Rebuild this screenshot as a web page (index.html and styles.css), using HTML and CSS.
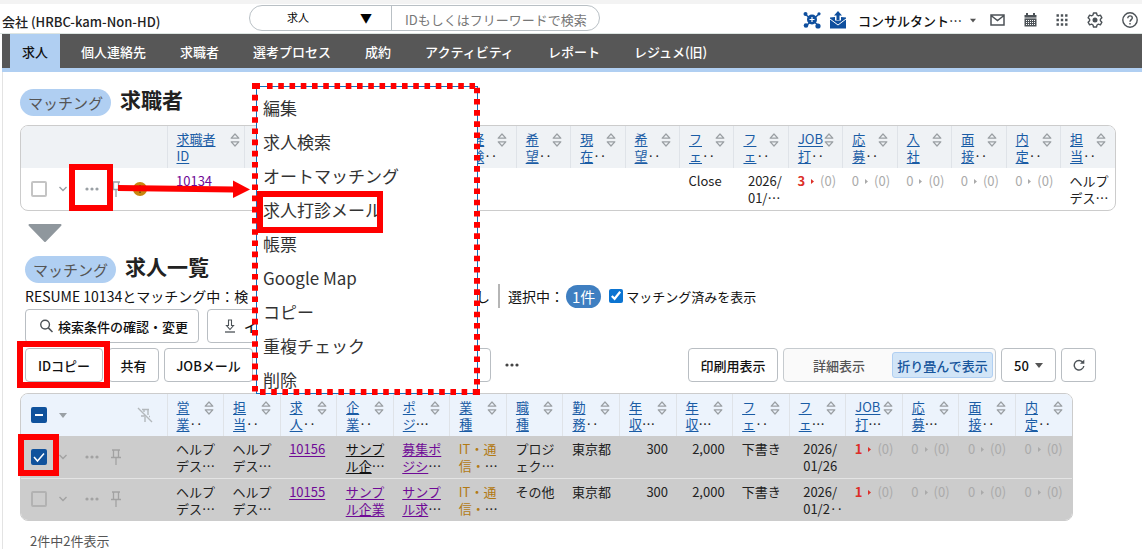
FILE: index.html
```html
<!DOCTYPE html>
<html lang="ja">
<head>
<meta charset="utf-8">
<title>求人一覧</title>
<link rel="stylesheet" href="styles.css">
</head>
<body>
<svg class="defs" aria-hidden="true">
  <symbol id="sort" viewBox="0 0 10 14"><path d="M1.200 5.200 5 1l3.800 4.200zM1.200 8.800 5 13l3.800-4.200z" fill="none" stroke="#9a9fa3" stroke-width="1.200" stroke-linejoin="round"/></symbol>
  <symbol id="pin" viewBox="0 0 12 16"><path d="M2 1h8M3.500 1v7M8.500 1v7M1 8.500h10M6 8.500V16" fill="none" stroke="currentColor" stroke-width="1.300"/></symbol>
  <symbol id="chev" viewBox="0 0 10 6"><path d="m1.500 1 3.500 3.500L8.500 1" fill="none" stroke="currentColor" stroke-width="1.400"/></symbol>
  <symbol id="dots" viewBox="0 0 14 4"><g fill="currentColor"><circle cx="2" cy="2" r="1.600"/><circle cx="7" cy="2" r="1.600"/><circle cx="12" cy="2" r="1.600"/></g></symbol>
  <symbol id="caret" viewBox="0 0 8 5"><path d="M0 0h8L4 5z" fill="currentColor"/></symbol>
</svg>

<header class="top">
  <div class="company">会社 (HRBC-kam-Non-HD)</div>
  <form class="search">
    <select aria-label="検索対象"><option>求人</option></select><span class="tri" aria-hidden="true">▼</span>
    <input type="text" aria-label="検索" placeholder="IDもしくはフリーワードで検索">
  </form>
  <div class="tools">
    <button aria-label="連携"><svg width="18" height="18" viewBox="0 0 18 18"><g stroke="#0f4f9e" stroke-width="1.500"><path d="M2 3l14 12M16 3 3 15"/></g><g fill="#0f4f9e"><circle cx="9" cy="8.500" r="5"/><circle cx="2.500" cy="3" r="2"/><circle cx="16" cy="2.800" r="1.600"/><circle cx="3" cy="14.500" r="2.300"/><circle cx="15" cy="15" r="2.600"/></g><path d="M6.500 8.500h5M9 6v5" stroke="#fff" stroke-width="1.200"/></svg></button>
    <button aria-label="メール取込"><svg width="16" height="18" viewBox="0 0 16 18"><path d="M0 6.500 5 6v3.500h6V6l5 .5V17.500H0z" fill="#0f4f9e"/><path d="M0 8l8 6 8-6" fill="none" stroke="#fff" stroke-width="1"/><path d="M8 0l4 4.500H9.500V9h-3V4.500H4z" fill="#0f4f9e"/></svg></button>
    <button class="user">コンサルタント…<svg width="6" height="5"><use href="#caret"/></svg></button>
    <button aria-label="メール"><svg width="15" height="12" viewBox="0 0 15 12"><path d="M1 1h13v10H1zM1 1.500l6.500 5 6.500-5" fill="none" stroke="#4c5257" stroke-width="1.500"/></svg></button>
    <button aria-label="カレンダー"><svg width="13" height="14" viewBox="0 0 13 14"><path d="M.5 2h12v11.500H.5z" fill="#4c5257"/><path d="M3 0v2M10 0v2" stroke="#4c5257" stroke-width="2"/><path d="M0 5h13" stroke="#fff" stroke-width=".8"/><path d="M2 7.500h9M2 9.500h9M2 11.500h9" stroke="#fff" stroke-dasharray="1 1"/></svg></button>
    <button aria-label="アプリ"><svg width="12" height="12" viewBox="0 0 12 12"><path d="M.5 1.500h11M.5 6h11M.5 10.500h11" stroke="#4c5257" stroke-width="2.400" stroke-dasharray="2.400 1.900"/></svg></button>
    <button aria-label="設定"><svg width="16" height="16" viewBox="0 0 16 16"><path d="M6.500 1h3l.5 2 1.400.8 2-.6 1.500 2.600-1.500 1.400v1.600l1.500 1.400-1.500 2.600-2-.6-1.400.8-.5 2h-3L6 13l-1.400-.8-2 .6-1.500-2.600 1.500-1.400V7.200L1.100 5.800l1.500-2.600 2 .6L6 3z" fill="none" stroke="#4c5257" stroke-width="1.400" stroke-linejoin="round"/><circle cx="8" cy="8" r="2.500" fill="#4c5257"/></svg></button>
    <button aria-label="ヘルプ"><svg width="16" height="16" viewBox="0 0 16 16"><circle cx="8" cy="8" r="7.200" fill="none" stroke="#4c5257" stroke-width="1.400"/><path d="M5.800 6.200C5.800 3 10.300 3.300 10.300 6 10.300 7.500 8 7.800 8 9.800M8 11v1.500" fill="none" stroke="#4c5257" stroke-width="1.400"/></svg></button>
  </div>
</header>

<nav class="nav">
  <a href="#" class="on">求人</a><a href="#">個人連絡先</a><a href="#">求職者</a><a href="#">選考プロセス</a><a href="#">成約</a><a href="#">アクティビティ</a><a href="#">レポート</a><a href="#">レジュメ(旧)</a>
</nav>

<main class="main">
  <div class="title"><span class="tag">マッチング</span><h1>求職者</h1></div>
  <div class="frame one">
  <table>
    <colgroup><col class="c-tool"><col class="c-id"><col span="16"></colgroup>
    <thead><tr>
      <th></th>
      <th><div class="hd wide"><span><a href="#">求職者<br>ID</a></span><button aria-label="並べ替え"><svg><use href="#sort"/></svg></button></div></th>
      <th></th><th></th><th></th><th></th>
      <th><div class="hd"><span><a href="#">経<br>験</a>‥</span><button aria-label="並べ替え"><svg><use href="#sort"/></svg></button></div></th>
      <th><div class="hd"><span><a href="#">希<br>望</a>‥</span><button aria-label="並べ替え"><svg><use href="#sort"/></svg></button></div></th>
      <th><div class="hd"><span><a href="#">現<br>在</a>‥</span><button aria-label="並べ替え"><svg><use href="#sort"/></svg></button></div></th>
      <th><div class="hd"><span><a href="#">希<br>望</a>‥</span><button aria-label="並べ替え"><svg><use href="#sort"/></svg></button></div></th>
      <th><div class="hd"><span><a href="#">フ<br>ェ</a>‥</span><button aria-label="並べ替え"><svg><use href="#sort"/></svg></button></div></th>
      <th><div class="hd"><span><a href="#">フ<br>ェ</a>‥</span><button aria-label="並べ替え"><svg><use href="#sort"/></svg></button></div></th>
      <th><div class="hd"><span><a href="#">JOB<br>打</a>‥</span><button aria-label="並べ替え"><svg><use href="#sort"/></svg></button></div></th>
      <th><div class="hd"><span><a href="#">応<br>募</a>‥</span><button aria-label="並べ替え"><svg><use href="#sort"/></svg></button></div></th>
      <th><div class="hd"><span><a href="#">入<br>社</a></span><button aria-label="並べ替え"><svg><use href="#sort"/></svg></button></div></th>
      <th><div class="hd"><span><a href="#">面<br>接</a>‥</span><button aria-label="並べ替え"><svg><use href="#sort"/></svg></button></div></th>
      <th><div class="hd"><span><a href="#">内<br>定</a>‥</span><button aria-label="並べ替え"><svg><use href="#sort"/></svg></button></div></th>
      <th><div class="hd"><span><a href="#">担<br>当</a>‥</span><button aria-label="並べ替え"><svg><use href="#sort"/></svg></button></div></th>
    </tr></thead>
    <tbody><tr>
      <td class="mid"><div class="acts"><input type="checkbox" aria-label="選択"><button aria-label="開く"><svg class="i-chev"><use href="#chev"/></svg></button><button aria-label="メニュー"><svg class="i-dots"><use href="#dots"/></svg></button><button aria-label="ピン"><svg class="i-pin"><use href="#pin"/></svg></button><svg class="i-warn" viewBox="0 0 14 14"><circle cx="7" cy="7" r="7" fill="#c8870f"/><path d="M7 3v5M7 9.500V11" stroke="#5c4210" stroke-width="1.500"/></svg></div></td>
      <td><a href="#" class="seen">10134</a></td>
      <td></td><td></td><td></td><td></td><td></td><td></td><td></td><td></td>
      <td>Close</td>
      <td class="date">2026/<br>01/…</td>
      <td class="cnt"><b>3</b><svg><use href="#caret"/></svg>(0)</td>
      <td class="cnt">0<svg><use href="#caret"/></svg>(0)</td>
      <td class="cnt">0<svg><use href="#caret"/></svg>(0)</td>
      <td class="cnt">0<svg><use href="#caret"/></svg>(0)</td>
      <td class="cnt">0<svg><use href="#caret"/></svg>(0)</td>
      <td>ヘルプ<br>デス…</td>
    </tr></tbody>
  </table>
  </div>

  <svg class="down" viewBox="0 0 34 19" aria-hidden="true"><path d="M1.500 1.500h31L17 17.500z" fill="#8f979d" stroke="#8f979d" stroke-width="2" stroke-linejoin="round"/></svg>

  <section class="list">
    <div class="title"><span class="tag">マッチング</span><h2>求人一覧</h2></div>
    <div class="status">
      <div class="cond"><span>RESUME 10134とマッチング中：検</span><span>し</span></div>
      <div class="picked">選択中：<span class="count">1件</span></div>
      <label class="done"><input type="checkbox" checked>マッチング済みを表示</label>
    </div>
    <div class="bar">
      <button class="btn find"><svg width="14" height="14" viewBox="0 0 14 14"><circle cx="5.500" cy="5.500" r="4.700" fill="none" stroke="#4c5257" stroke-width="1.500"/><path d="m9 9 4.500 4.500" stroke="#4c5257" stroke-width="1.700"/></svg>検索条件の確認・変更</button>
      <button class="btn import"><svg width="12" height="14" viewBox="0 0 12 14"><path d="M4.500 1h3v5.500H9.500L6 10.500 2.500 6.500h2z" fill="none" stroke="#4c5257" stroke-width="1.100"/><path d="M1 13h10" stroke="#4c5257" stroke-width="1.300"/></svg>イ</button>
    </div>
    <div class="bar">
      <button class="btn copy">IDコピー</button>
      <button class="btn share">共有</button>
      <button class="btn job">JOBメール</button>
      <button class="btn more" aria-label="操作"></button>
      <button class="etc" aria-label="その他"><svg class="i-dots"><use href="#dots"/></svg></button>
      <div class="view">
        <button class="btn print">印刷用表示</button>
        <div class="seg"><button>詳細表示</button><button class="on">折り畳んで表示</button></div>
        <button class="btn size">50<svg width="8" height="5"><use href="#caret"/></svg></button>
        <button class="btn reload" aria-label="更新"><svg width="12" height="12" viewBox="0 0 12 12"><path d="M10 3.500A4.800 4.800 0 1 0 10.800 7" fill="none" stroke="#4c5257" stroke-width="1.400"/><path d="M11.300.5v4.300H7z" fill="#4c5257"/></svg></button>
      </div>
    </div>
  </section>

  <div class="frame two">
  <table>
    <colgroup><col class="c-tool"><col span="16"></colgroup>
    <thead><tr>
      <th class="mid"><div class="acts"><input type="checkbox" class="part" aria-label="すべて選択"><button aria-label="選択メニュー"><svg class="i-caret"><use href="#caret"/></svg></button><svg class="i-off" viewBox="0 0 16 16"><path d="M1 1l14 14M5 2.500h7M7 3v2M11 3v5M4 9h5M12 9.500h1M8 10v5" fill="none" stroke="#b3b8bc" stroke-width="1.400"/></svg></div></th>
      <th><div class="hd"><span><a href="#">営<br>業</a>‥</span><button aria-label="並べ替え"><svg><use href="#sort"/></svg></button></div></th>
      <th><div class="hd"><span><a href="#">担<br>当</a>‥</span><button aria-label="並べ替え"><svg><use href="#sort"/></svg></button></div></th>
      <th><div class="hd"><span><a href="#">求<br>人</a>‥</span><button aria-label="並べ替え"><svg><use href="#sort"/></svg></button></div></th>
      <th><div class="hd"><span><a href="#">企<br>業</a>‥</span><button aria-label="並べ替え"><svg><use href="#sort"/></svg></button></div></th>
      <th><div class="hd"><span><a href="#">ポ<br>ジ</a>…</span><button aria-label="並べ替え"><svg><use href="#sort"/></svg></button></div></th>
      <th><div class="hd"><span><a href="#">業<br>種</a></span><button aria-label="並べ替え"><svg><use href="#sort"/></svg></button></div></th>
      <th><div class="hd"><span><a href="#">職<br>種</a></span><button aria-label="並べ替え"><svg><use href="#sort"/></svg></button></div></th>
      <th><div class="hd"><span><a href="#">勤<br>務</a>‥</span><button aria-label="並べ替え"><svg><use href="#sort"/></svg></button></div></th>
      <th><div class="hd"><span><a href="#">年<br>収</a>…</span><button aria-label="並べ替え"><svg><use href="#sort"/></svg></button></div></th>
      <th><div class="hd"><span><a href="#">年<br>収</a>…</span><button aria-label="並べ替え"><svg><use href="#sort"/></svg></button></div></th>
      <th><div class="hd"><span><a href="#">フ<br>ェ</a>‥</span><button aria-label="並べ替え"><svg><use href="#sort"/></svg></button></div></th>
      <th><div class="hd"><span><a href="#">フ<br>ェ</a>…</span><button aria-label="並べ替え"><svg><use href="#sort"/></svg></button></div></th>
      <th><div class="hd"><span><a href="#">JOB<br>打</a>…</span><button aria-label="並べ替え"><svg><use href="#sort"/></svg></button></div></th>
      <th><div class="hd"><span><a href="#">応<br>募</a>…</span><button aria-label="並べ替え"><svg><use href="#sort"/></svg></button></div></th>
      <th><div class="hd"><span><a href="#">面<br>接</a>‥</span><button aria-label="並べ替え"><svg><use href="#sort"/></svg></button></div></th>
      <th><div class="hd"><span><a href="#">内<br>定</a>‥</span><button aria-label="並べ替え"><svg><use href="#sort"/></svg></button></div></th>
    </tr></thead>
    <tbody>
    <tr>
      <td class="mid"><div class="acts"><input type="checkbox" checked aria-label="選択"><button aria-label="開く"><svg class="i-chev"><use href="#chev"/></svg></button><button aria-label="メニュー"><svg class="i-dots"><use href="#dots"/></svg></button><button aria-label="ピン"><svg class="i-pin"><use href="#pin"/></svg></button></div></td>
      <td>ヘルプ<br>デス…</td><td>ヘルプ<br>デス…</td>
      <td><a href="#" class="seen">10156</a></td>
      <td><a href="#" class="dark">サンプ<br>ル企</a>…</td>
      <td><a href="#" class="seen">募集ポ<br>ジシ</a>…</td>
      <td><span class="gold">IT・通<br>信・</span>…</td>
      <td>プロジ<br>ェク…</td><td>東京都</td>
      <td class="num">300</td><td class="num">2,000</td><td>下書き</td>
      <td class="date">2026/<br>01/26</td>
      <td class="cnt"><b>1</b><svg><use href="#caret"/></svg>(0)</td>
      <td class="cnt">0<svg><use href="#caret"/></svg>(0)</td>
      <td class="cnt">0<svg><use href="#caret"/></svg>(0)</td>
      <td class="cnt">0<svg><use href="#caret"/></svg>(0)</td>
    </tr>
    <tr>
      <td class="mid"><div class="acts"><input type="checkbox" aria-label="選択"><button aria-label="開く"><svg class="i-chev"><use href="#chev"/></svg></button><button aria-label="メニュー"><svg class="i-dots"><use href="#dots"/></svg></button><button aria-label="ピン"><svg class="i-pin"><use href="#pin"/></svg></button></div></td>
      <td>ヘルプ<br>デス…</td><td>ヘルプ<br>デス…</td>
      <td><a href="#" class="seen">10155</a></td>
      <td><a href="#" class="seen">サンプ<br>ル企業</a></td>
      <td><a href="#" class="seen">サンプ<br>ル求</a>…</td>
      <td><span class="gold">IT・通<br>信・</span>…</td>
      <td>その他</td><td>東京都</td>
      <td class="num">300</td><td class="num">2,000</td><td>下書き</td>
      <td class="date">2026/<br>01/2‥</td>
      <td class="cnt"><b>1</b><svg><use href="#caret"/></svg>(0)</td>
      <td class="cnt">0<svg><use href="#caret"/></svg>(0)</td>
      <td class="cnt">0<svg><use href="#caret"/></svg>(0)</td>
      <td class="cnt">0<svg><use href="#caret"/></svg>(0)</td>
    </tr>
    </tbody>
  </table>
  </div>
  <p class="total">2件中2件表示</p>
</main>

<div class="menu" role="menu">
  <button role="menuitem">編集</button><button role="menuitem">求人検索</button><button role="menuitem">オートマッチング</button><button role="menuitem">求人打診メール</button><button role="menuitem">帳票</button><button role="menuitem">Google Map</button><button role="menuitem">コピー</button><button role="menuitem">重複チェック</button><button role="menuitem">削除</button>
</div>

<svg class="marks" width="500" height="500" aria-hidden="true">
  <g fill="none" stroke="#f00" stroke-width="6">
    <path d="M267 86H475" stroke-dasharray="5.600 5.650"/>
    <path d="M252 86h8"/>
    <path d="M255 94.800V392M477 87.700V390M260 392h217" stroke-dasharray="5.600 5.600"/>
    <path d="M474 392h6"/>
    <path d="M72 167h38v41H72zM260 194h120v36H260zM20 344h87v41H20zM21 437h35v36H21z"/>
    <path d="M118 188l116 1.500"/>
  </g>
  <path d="M233 180.500 250 189.500 233 198z" fill="#f00"/>
</svg>
</body>
</html>
```
FILE: styles.css
```css
* { box-sizing: border-box; }
body {
  margin: 0;
  position: relative;
  background: #fff;
  color: #222;
  font: 13px/17px "Noto Sans CJK JP", "Noto Sans", sans-serif;
}
button, input, select { font: inherit; color: inherit; }
button { border: 0; padding: 0; background: none; display: inline-flex; align-items: center; justify-content: center; white-space: nowrap; }
h1, h2 { margin: 0; font-size: 21px; line-height: 28px; font-weight: 700; }
.defs { position: absolute; width: 0; height: 0; }

.top {
  display: flex;
  align-items: center;
  height: 34px;
  padding: 0 5px 0 2px;
  border-top: 4px solid #f3f3f3;
  border-bottom: 1px solid #dde5e2;
}
.company { width: 247px; padding-top: 6px; font-weight: 500; white-space: nowrap; color: #222; }
.search {
  display: flex;
  align-items: center;
  width: 351px;
  height: 26px;
  border: 1px solid #b9c0c5;
  border-radius: 13px;
  margin-bottom: 2px;
}
.search select { appearance: none; border: 0; background: none; width: 110px; padding: 0 0 0 37px; font-size: 11px; color: #000; }
.tri { width: 31px; font-size: 12px; color: #000; }
.search input { flex: 1; min-width: 0; height: 24px; border: 0; border-left: 1px solid #b9c0c5; background: none; padding: 3px 0 0 13px; outline: 0; }
.search input::placeholder { color: #777; }
.tools { display: flex; align-items: center; gap: 20px; margin-left: auto; padding-top: 3px; }
.tools button:first-child { margin-right: -11px; }
.tools .user { gap: 8px; margin: 0 -6px 0 -8px; font-weight: 500; color: #111; }
.tools .user svg { color: #555; }
.tools .user ~ button { margin-right: -1px; }

.nav {
  display: flex;
  height: 38px;
  margin-left: 2px;
  padding-left: 8px;
  background: #575757;
  border-bottom: 4px solid #b0cff2;
}
.nav a { display: flex; align-items: center; padding: 0 17px; color: #fff; font-weight: 500; text-decoration: none; }
.nav .on { padding: 0 12px; margin-right: 4px; background: #b0cff2; color: #111; }

.main { margin-left: 2px; padding: 16px 26px 0 17px; border-left: 1px solid #e3e3e3; }
.title { display: flex; align-items: center; gap: 9px; height: 28px; }
.title h1, .title h2 { margin-top: -6px; }
.tag { padding: 0 8px; border-radius: 14px; background: #b0cff2; color: #555; font-size: 15px; line-height: 27px; }

.frame { border: 1px solid #ccc; border-radius: 8px; overflow: hidden; }
.frame table { width: 100%; table-layout: fixed; border-collapse: collapse; }
.c-tool { width: 146px; }
.c-id { width: 77px; }
.frame th, .frame td { height: 42px; padding: 4px 0 3px 9px; vertical-align: top; text-align: left; white-space: nowrap; font-weight: 400; color: #222; }
.frame th { border-left: 1px solid #dfe3e8; background: #eff2f5; }
.frame th:first-child { border-left: 0; }
.frame .mid { vertical-align: middle; padding: 0 0 0 10px; }
.one { margin: 9px 0 12px; }
.two { margin: 11px 43px 0 0; }
.two th { background: #ecf3fc; }
.two tbody { background: #ccc; }
.two tr + tr td { border-top: 1px solid #e4e4e4; }
.hd { display: flex; justify-content: space-between; align-items: flex-start; padding-right: 9px; }
.hd span { width: 26px; }
.hd.wide span { width: 40px; }
.hd.wide { padding-right: 4px; }
.hd a { color: #1a5ca5; text-underline-offset: 2px; }
.hd button { padding-top: 3px; }
.hd svg { width: 10px; height: 14px; }
.seen { color: #6f0a96; text-underline-offset: 2px; }
.dark { color: #111; text-underline-offset: 2px; }
.gold { color: #b27a14; }
.frame .num { padding: 4px 8px 0 0; text-align: right; }
.frame .date { padding-left: 14px; }
.frame .cnt { color: #aaa; }
.cnt b { color: #dc2f28; }
.cnt svg { width: 5px; height: 3px; margin: 0 5px; transform: rotate(-90deg); vertical-align: 3px; }
.cnt b + svg { color: #dc2f28; }

.acts { display: flex; align-items: center; color: #9aa0a5; }
.acts input {
  appearance: none;
  width: 16px;
  height: 16px;
  margin: 0 11px 0 0;
  border: 2px solid #c4c4c4;
  border-radius: 2px;
  background: transparent center / 12px no-repeat;
}
.two .acts input { border-color: #b2b2b2; }
.two .acts input:checked, .two .acts .part { border-color: #10529c; background-color: #10529c; }
.two .acts input:checked { background-image: url("data:image/svg+xml,%3Csvg xmlns='http://www.w3.org/2000/svg' viewBox='0 0 12 12'%3E%3Cpath d='M1 6l3.500 4L11 2.500' fill='none' stroke='white' stroke-width='1.500'/%3E%3C/svg%3E"); }
.two .acts .part { background-image: linear-gradient(#fff, #fff); background-size: 8px 2px; margin-right: 12px; }
.i-chev { width: 10px; height: 6px; margin-right: 17px; }
.i-dots { width: 14px; height: 4px; }
.acts .i-dots { margin-right: 11px; }
.i-pin { width: 12px; height: 16px; margin-right: 11px; }
.i-warn { width: 14px; height: 14px; }
.two tbody .acts { color: #a2a2a2; }
.i-caret { width: 8px; height: 5px; margin-right: 70px; }
.i-off { width: 16px; height: 16px; }

.down { display: block; width: 34px; height: 20px; margin: 0 0 12px 8px; }
.list { padding-left: 5px; margin-right: 20px; }
.status { display: flex; align-items: center; height: 26px; font-size: 14px; white-space: nowrap; color: #111; }
.cond { display: flex; justify-content: space-between; width: 465px; margin-right: 8px; }
.picked { display: flex; align-items: center; height: 24px; padding-left: 8px; border-left: 2px solid #b5b5b5; }
.count { margin-left: 2px; padding: 0 6px; border-radius: 12px; background: #3f7fc1; color: #fff; font-size: 15px; line-height: 23px; }
.done { display: flex; align-items: center; margin-left: 8px; gap: 3px; font-size: 13px; }
.done input { width: 14px; height: 14px; margin: 0; accent-color: #0b74d1; }
.bar { display: flex; align-items: center; gap: 5px; margin-bottom: 5px; }
.btn { height: 34px; border: 1px solid #b9bec3; border-radius: 4px; background: #fff; color: #111; font-weight: 500; padding: 0 12px; }
.find { gap: 5px; width: 174px; padding: 0 10px 0 14px; }
.import { gap: 8px; width: 100px; margin-left: 3px; justify-content: flex-start; padding-left: 16px; }
.copy { width: 78px; }
.share { width: 51px; }
.job { width: 89px; }
.more { width: 233px; }
.etc { margin-left: 9px; color: #444; }
.view { display: flex; gap: 5px; margin-left: auto; }
.print { width: 90px; }
.seg { display: flex; align-items: center; width: 213px; height: 34px; padding: 0 2px; border: 1px solid #c6cbcf; border-radius: 4px; background: #fafafa; }
.seg button { flex: 1; height: 26px; color: #555; font-weight: 500; }
.seg .on { flex: none; width: 101px; border: 1px solid #b0cff2; border-radius: 3px; background: #d2e5f7; color: #17559c; }
.size { width: 55px; gap: 6px; }
.size svg { color: #555; }
.reload { width: 35px; padding: 0; }
.total { margin: 11px 0 0 10px; color: #555; }

.menu {
  position: absolute;
  left: 256px;
  top: 86px;
  width: 222px;
  height: 308px;
  padding: 4px 6px 0;
  border: 1px solid #1170bd;
  background: #fff;
  display: flex;
  flex-direction: column;
}
.menu button { flex: none; height: 34px; justify-content: flex-start; font-size: 17px; line-height: 24px; color: #333; }
.marks { position: absolute; left: 0; top: 0; pointer-events: none; }
```
